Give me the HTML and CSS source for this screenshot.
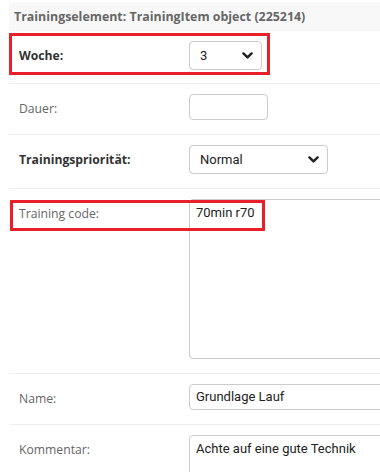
FILE: index.html
```html
<!DOCTYPE html>
<html lang="de">
<head>
<meta charset="utf-8">
<link rel="stylesheet" href="styles.css">
</head>
<body>
<div class="module">
  <h2 class="module-title">Trainingselement: TrainingItem object (225214)</h2>

  <div class="row">
    <label class="lbl strong">Woche:</label>
    <div class="select small">
      <span>3</span>
      <svg class="chev" width="11" height="7" viewBox="0 0 11 7"><path d="M1.4 1.4 L5.5 5.4 L9.6 1.4" fill="none" stroke="#222" stroke-width="2.4" stroke-linecap="round" stroke-linejoin="round"/></svg>
    </div>
    <div class="mark mark-1"></div>
  </div>

  <div class="row">
    <label class="lbl">Dauer:</label>
    <div class="input short"></div>
  </div>

  <div class="row">
    <label class="lbl strong">Trainingspriorität:</label>
    <div class="select wide">
      <span>Normal</span>
      <svg class="chev" width="11" height="7" viewBox="0 0 11 7"><path d="M1.4 1.4 L5.5 5.4 L9.6 1.4" fill="none" stroke="#222" stroke-width="2.4" stroke-linecap="round" stroke-linejoin="round"/></svg>
    </div>
  </div>

  <div class="row">
    <label class="lbl">Training code:</label>
    <div class="textarea tall">70min r70</div>
    <div class="mark mark-2"></div>
  </div>

  <div class="row">
    <label class="lbl">Name:</label>
    <div class="input long">Grundlage Lauf</div>
  </div>

  <div class="row">
    <label class="lbl">Kommentar:</label>
    <div class="textarea tall">Achte auf eine gute Technik</div>
  </div>
</div>
</body>
</html>
```

FILE: styles.css
```css
html, body {
  margin: 0;
  padding: 0;
  background: #fff;
  overflow: hidden;
}
body {
  width: 380px;
  height: 472px;
  font-family: "Open Sans", "Noto Sans", sans-serif;
}
.module {
  margin: 2px 0 0 9px;
  height: 470px;
  overflow: hidden;
  position: relative;
}
.module-title {
  margin: 0;
  height: 29px;
  line-height: 29px;
  padding-left: 5px;
  background: #f8f8f8;
  color: #666;
  font-size: 12.4px;
  font-weight: 700;
  white-space: nowrap;
  overflow: hidden;
}
.row {
  position: relative;
  display: flex;
  align-items: flex-start;
  padding: 10px 0 14px 10px;
  border-bottom: 1px solid #eee;
}
.row:first-of-type {
  padding-bottom: 13px;
}
.lbl {
  flex: 0 0 170px;
  width: 170px;
  font-size: 12.2px;
  color: #666;
  line-height: 22px;
  padding-top: 4px;
  white-space: nowrap;
}
.lbl.strong {
  color: #333;
  font-weight: 700;
  line-height: 29px;
  padding-top: 0;
}
.select, .input, .textarea {
  box-sizing: border-box;
  border: 1px solid #ccc;
  border-radius: 4px;
  background: #fff;
  font-family: Roboto, "Liberation Sans", sans-serif;
  font-size: 13px;
  color: #222;
  flex: 0 0 auto;
}
.select {
  height: 29px;
  display: flex;
  align-items: center;
  justify-content: space-between;
  padding: 0 8px 0 10px;
}
.select.small { width: 73px; }
.select.wide { width: 139px; }
.chev { display: block; }
.input {
  height: 26px;
  line-height: 24px;
  padding: 0 6px;
}
.input.short { width: 79px; }
.input.long { width: 240px; }
.textarea {
  width: 240px;
  padding: 4px 6px;
  line-height: 18px;
}
.textarea.tall { height: 160px; }
.mark {
  position: absolute;
  border: 3px solid #e8202a;
  box-sizing: border-box;
  pointer-events: none;
}
.mark-1 {
  left: 0;
  top: 2px;
  width: 261px;
  height: 42px;
}
.mark-2 {
  left: 1px;
  top: 11px;
  width: 255px;
  height: 31px;
}
```
